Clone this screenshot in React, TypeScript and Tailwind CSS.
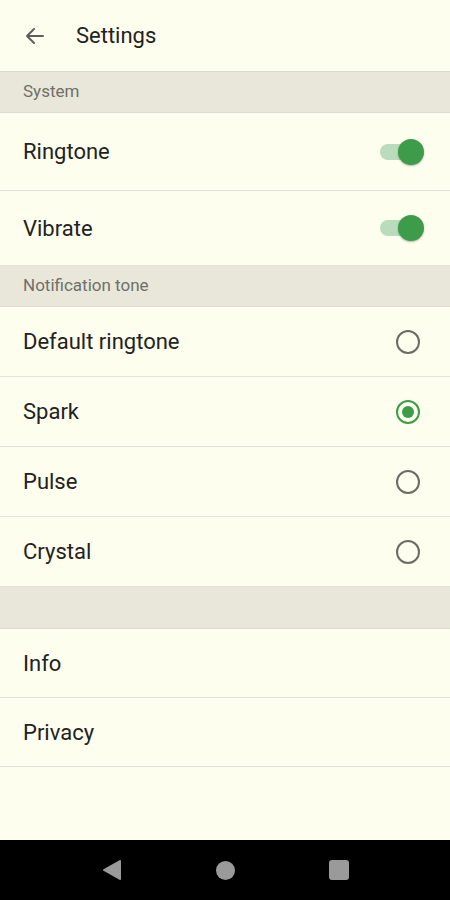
import React from 'react';

/* Settings screen — cream list with switches and radio choices */

function Toggle() {
  return (
    <div className="relative w-[40px] h-[24px] flex items-center">
      <div className="w-[38px] h-[16px] rounded-full bg-[#b9dcbc]" />
      <div className="absolute right-[-4px] w-[26px] h-[26px] rounded-full bg-[#3d9c49] shadow-[0_1px_2px_rgba(0,0,0,0.3)]" />
    </div>
  );
}

function Radio({ checked }: { checked?: boolean }) {
  if (checked) {
    return (
      <div className="w-[24px] h-[24px] rounded-full border-[2px] border-[#3d9c49] flex items-center justify-center">
        <div className="w-[12px] h-[12px] rounded-full bg-[#3d9c49]" />
      </div>
    );
  }
  return <div className="w-[24px] h-[24px] rounded-full border-[2px] border-[#6b6b66]" />;
}

function SectionHeader({ label, h = 'h-[41px]' }: { label?: string; h?: string }) {
  return (
    <div className={`${h} bg-[#e8e7d9] border-b border-[#dcdcd0] flex items-center px-[23px] text-[17px] text-[#6f6f6a]`}>
      {label}
    </div>
  );
}

function Row({ label, height, right }: { label: string; height: string; right?: React.ReactNode }) {
  return (
    <div className={`${height} border-b border-[#e3e3d7] flex items-center justify-between pl-[23px] pr-[30px] text-[22px] text-[#222]`}>
      <span>{label}</span>
      {right}
    </div>
  );
}

export default function App() {
  const tones = ['Default ringtone', 'Spark', 'Pulse', 'Crystal'];
  return (
    <div className="w-[450px] h-[900px] flex flex-col bg-[#fefeee]" style={{ fontFamily: 'Roboto, "Noto Sans", sans-serif' }}>
      <div className="h-[72px] flex items-center border-b border-[#d9d9cd] shrink-0">
        <svg className="ml-[23px]" width="24" height="24" viewBox="0 0 24 24" fill="none" stroke="#5f5f5a" strokeWidth="2" strokeLinecap="round" strokeLinejoin="round">
          <path d="M20 12H4M11 5l-7 7 7 7" />
        </svg>
        <span className="ml-[29px] text-[22px] text-[#222]">Settings</span>
      </div>

      <SectionHeader label="System" />
      <Row label="Ringtone" height="h-[78px]" right={<Toggle />} />
      <Row label="Vibrate" height="h-[75px]" right={<Toggle />} />

      <SectionHeader label="Notification tone" />
      {tones.map((t) => (
        <Row key={t} label={t} height="h-[70px]" right={<Radio checked={t === 'Spark'} />} />
      ))}

      <SectionHeader h="h-[42px]" />
      <Row label="Info" height="h-[69px]" />
      <Row label="Privacy" height="h-[69px]" />

      <div className="flex-1" />

      <div className="h-[60px] bg-black flex items-center justify-center gap-[94px] shrink-0">
        <svg width="20" height="22" viewBox="0 0 20 22">
          <path d="M18 2 L2 11 L18 20 Z" fill="#9a9a9a" stroke="#9a9a9a" strokeWidth="2" strokeLinejoin="round" />
        </svg>
        <div className="w-[19px] h-[19px] rounded-full bg-[#9a9a9a]" />
        <div className="w-[20px] h-[20px] rounded-[3px] bg-[#9a9a9a]" />
      </div>
    </div>
  );
}
